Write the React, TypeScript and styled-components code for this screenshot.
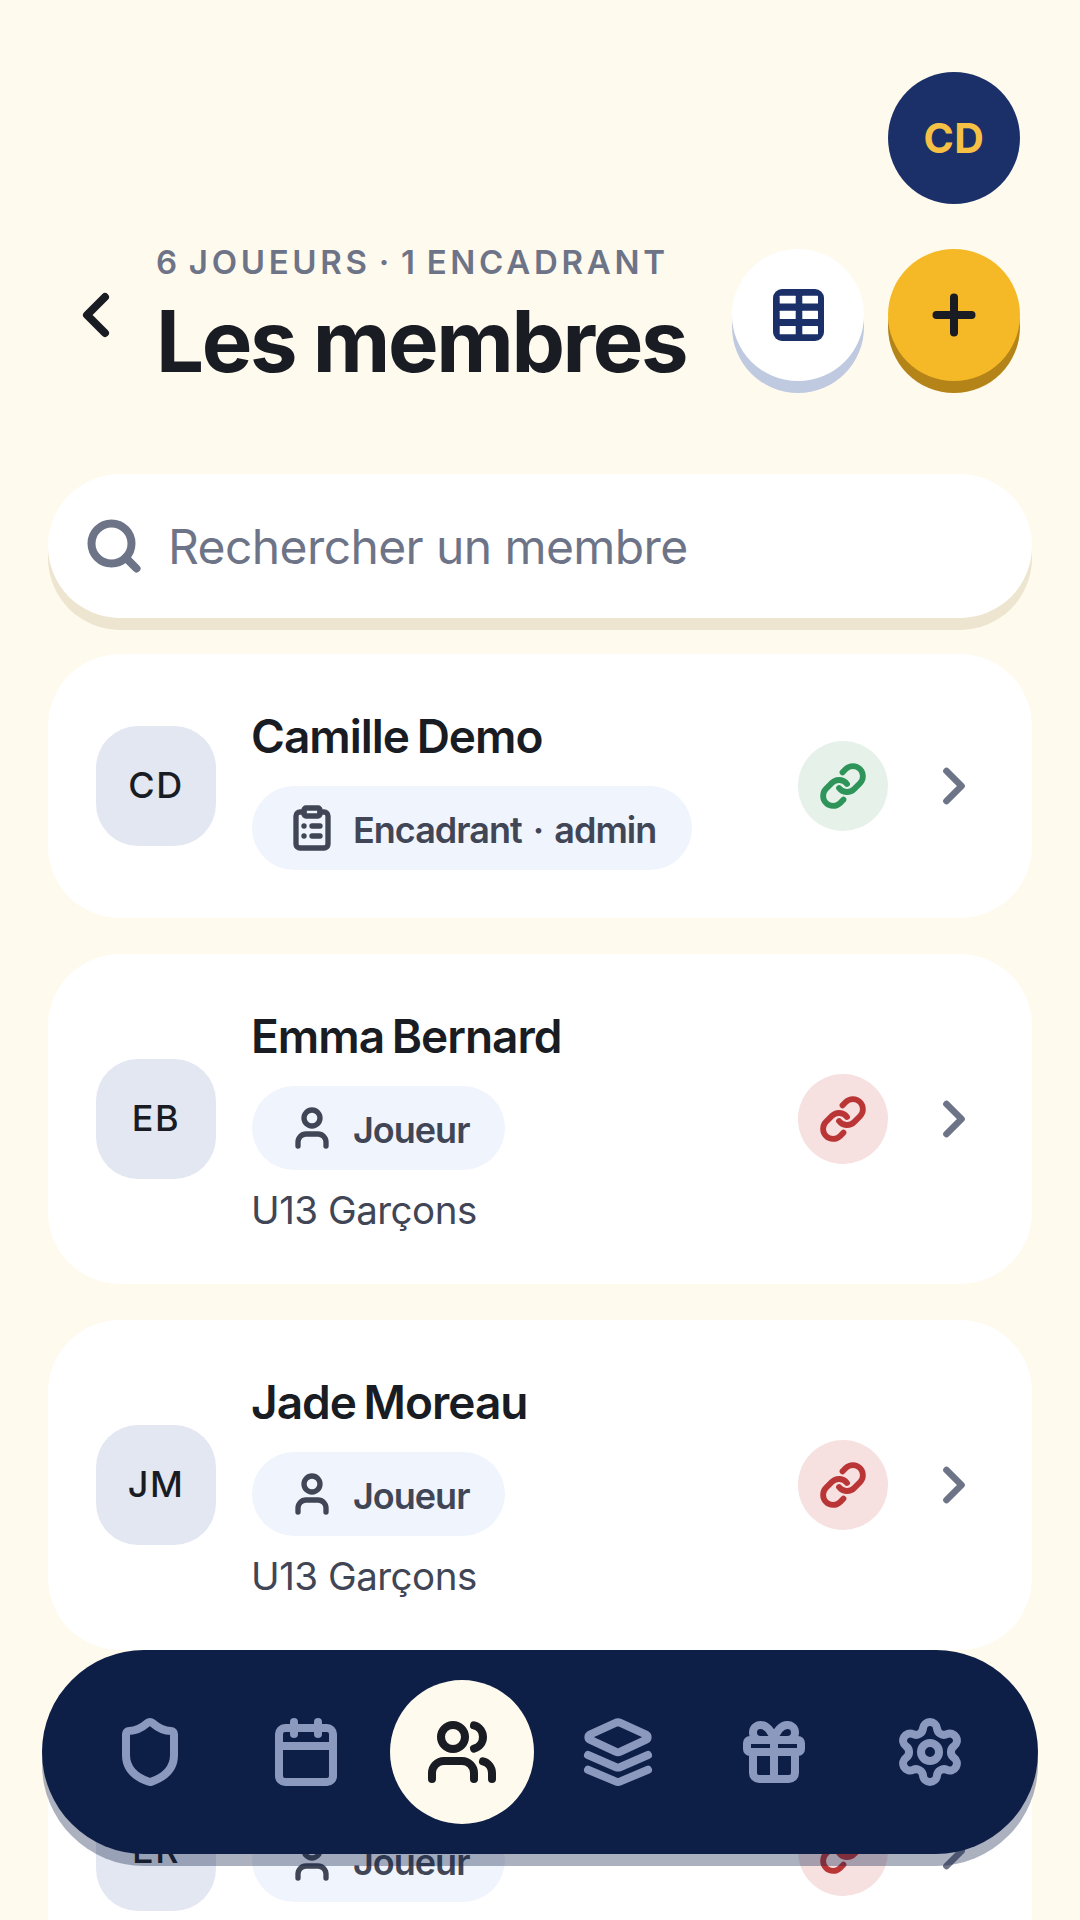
import React from "react";
import styled, { createGlobalStyle } from "styled-components";
import { Calendar, ChevronLeft, ChevronRight, ClipboardList, Gift, Link, Plus, Search, Settings, Shield, User, Users } from "lucide-react";

const colors = {
  cream: "#fffaee",
  navy: "#1b3068",
  darkNavy: "#0e1f47",
  ink: "#191c23",
  grey: "#6e7487",
  slate: "#414656",
  yellow: "#f5b928",
  periwinkle: "#8a99bd",
};

const GlobalStyle = createGlobalStyle`
  html, body {
    margin: 0;
    padding: 0;
    background: ${colors.cream};
  }
  body {
    font-family: Inter, "Liberation Sans", sans-serif;
  }
`;

interface Member {
  initials: string;
  name: string;
  role: string;
  team?: string;
  linked: boolean;
}

const members: Member[] = [
  { initials: "CD", name: "Camille Demo", role: "Encadrant · admin", linked: true },
  { initials: "EB", name: "Emma Bernard", role: "Joueur", team: "U13 Garçons", linked: false },
  { initials: "JM", name: "Jade Moreau", role: "Joueur", team: "U13 Garçons", linked: false },
  { initials: "ER", name: "Enzo Roux", role: "Joueur", team: "U13 Garçons", linked: false },
];

function TableIcon() {
  return (
    <svg width="51" height="52" viewBox="0 0 51 52">
      <rect width="51" height="52" rx="9" fill={colors.navy} />
      <g fill="#fff">
        <rect x="6.700" y="6.700" width="16" height="7.700" rx="0.500" />
        <rect x="29.300" y="6.700" width="15.700" height="7.700" rx="0.500" />
        <rect x="6.700" y="21.800" width="16" height="8.200" rx="0.500" />
        <rect x="29.300" y="21.800" width="15.700" height="8.200" rx="0.500" />
        <rect x="6.700" y="37" width="16" height="8.300" rx="0.500" />
        <rect x="29.300" y="37" width="15.700" height="8.300" rx="0.500" />
      </g>
    </svg>
  );
}

function StackIcon() {
  return (
    <svg width="72" height="72" viewBox="0 0 24 24" fill="none" stroke="currentColor" strokeWidth="2.67" strokeLinecap="round" strokeLinejoin="round">
      <path d="M12.800 2.300a2 2 0 0 0-1.600 0L2.600 6.200a1 1 0 0 0 0 1.700l8.600 4a2 2 0 0 0 1.600 0l8.600-4a1 1 0 0 0 0-1.700z" />
      <path d="M2 13l9.200 4a2 2 0 0 0 1.600 0L22 13" />
      <path d="M2 17.900l9.200 3.900a2 2 0 0 0 1.600 0L22 17.900" />
    </svg>
  );
}

export default function App() {
  return (
    <Page>
      <GlobalStyle />
      <TopBar>
        <ProfileBadge>CD</ProfileBadge>
      </TopBar>
      <Header>
        <BackButton>
          <ChevronLeft size={72} strokeWidth={2.67} />
        </BackButton>
        <Heading>
          <Eyebrow>6 JOUEURS · 1 ENCADRANT</Eyebrow>
          <Title>Les membres</Title>
        </Heading>
        <RoundButton $bg="#ffffff" $edge="#bfc9e0">
          <TableIcon />
        </RoundButton>
        <RoundButton $bg={colors.yellow} $edge="#b58419">
          <Plus size={60} strokeWidth={3.2} color={colors.ink} />
        </RoundButton>
      </Header>
      <SearchBar>
        <Search size={60} strokeWidth={3.2} color={colors.grey} />
        <SearchText>Rechercher un membre</SearchText>
      </SearchBar>
      <List>
        {members.map((m) => (
          <Card key={m.initials}>
            <Initials>{m.initials}</Initials>
            <Info>
              <Name>{m.name}</Name>
              <RolePill>
                {m.team ? <User size={48} strokeWidth={2.67} /> : <ClipboardList size={48} strokeWidth={2.67} />}
                <RoleLabel>{m.role}</RoleLabel>
              </RolePill>
              {m.team ? <Team>{m.team}</Team> : null}
            </Info>
            <LinkBadge $linked={m.linked}>
              <Link size={48} strokeWidth={2.9} />
            </LinkBadge>
            <Chevron>
              <ChevronRight size={60} strokeWidth={2.67} />
            </Chevron>
          </Card>
        ))}
      </List>
      <BottomNav>
        <NavItem><Shield size={72} strokeWidth={2.67} /></NavItem>
        <NavItem><Calendar size={72} strokeWidth={2.67} /></NavItem>
        <NavItem $active><Users size={72} strokeWidth={2.67} /></NavItem>
        <NavItem><StackIcon /></NavItem>
        <NavItem><Gift size={72} strokeWidth={2.67} /></NavItem>
        <NavItem><Settings size={72} strokeWidth={2.67} /></NavItem>
      </BottomNav>
    </Page>
  );
}

const Page = styled.div`
  position: relative;
  width: 1080px;
  height: 1920px;
  overflow: hidden;
  box-sizing: border-box;
  padding: 72px 48px 0;
  background: ${colors.cream};
`;

const TopBar = styled.div`
  display: flex;
  justify-content: flex-end;
  padding-right: 12px;
`;

const ProfileBadge = styled.div`
  display: flex;
  align-items: center;
  justify-content: center;
  width: 132px;
  height: 132px;
  border-radius: 50%;
  background: ${colors.navy};
  color: #f6c044;
  font-size: 41px;
  font-weight: 700;
  letter-spacing: 0.5px;
`;

const Header = styled.div`
  display: flex;
  align-items: center;
  height: 144px;
  margin-top: 45px;
  padding-right: 12px;
`;

const BackButton = styled.div`
  display: flex;
  width: 108px;
  margin-top: -12px;
  padding-left: 12px;
  box-sizing: border-box;
  color: ${colors.ink};
`;

const Heading = styled.div`
  display: flex;
  flex-direction: column;
  flex: 1;
  margin-top: -12px;
`;

const Eyebrow = styled.div`
  font-size: 33px;
  line-height: 36px;
  font-weight: 600;
  letter-spacing: 3.7px;
  word-spacing: -4px;
  color: ${colors.grey};
`;

const Title = styled.div`
  margin-top: 17px;
  font-size: 85px;
  line-height: 90px;
  font-weight: 700;
  letter-spacing: -2.4px;
  color: ${colors.ink};
`;

const RoundButton = styled.div<{ $bg: string; $edge: string }>`
  display: flex;
  flex-shrink: 0;
  align-items: center;
  justify-content: center;
  width: 132px;
  height: 132px;
  margin-left: 24px;
  margin-bottom: 12px;
  border-radius: 50%;
  background: ${(p) => p.$bg};
  box-shadow: 0 12px 0 ${(p) => p.$edge};
`;

const SearchBar = styled.div`
  display: flex;
  align-items: center;
  gap: 24px;
  height: 144px;
  margin-top: 81px;
  padding: 0 36px;
  box-sizing: border-box;
  border-radius: 72px;
  background: #ffffff;
  box-shadow: 0 12px 0 #ede5cf;
`;

const SearchText = styled.span`
  font-size: 48px;
  font-weight: 400;
  letter-spacing: -0.6px;
  color: ${colors.grey};
`;

const List = styled.div`
  display: flex;
  flex-direction: column;
  flex-shrink: 0;
  gap: 36px;
  margin-top: 36px;
`;

const Card = styled.div`
  display: flex;
  align-items: center;
  flex-shrink: 0;
  padding: 48px;
  box-sizing: border-box;
  border-radius: 72px;
  background: #ffffff;
`;

const Initials = styled.div`
  display: flex;
  align-items: center;
  justify-content: center;
  flex-shrink: 0;
  width: 120px;
  height: 120px;
  padding-bottom: 2px;
  box-sizing: border-box;
  border-radius: 42px;
  background: #e3e7f2;
  color: ${colors.ink};
  font-size: 36px;
  font-weight: 500;
  letter-spacing: 1.5px;
`;

const Info = styled.div`
  display: flex;
  flex-direction: column;
  align-items: flex-start;
  flex: 1;
  margin-left: 36px;
`;

const Name = styled.div`
  height: 66px;
  margin-left: -1px;
  padding-top: 1px;
  box-sizing: border-box;
  font-size: 46px;
  line-height: 66px;
  font-weight: 600;
  letter-spacing: -1px;
  word-spacing: -3px;
  color: ${colors.ink};
`;

const RolePill = styled.div`
  display: flex;
  align-items: center;
  gap: 17px;
  height: 84px;
  margin-top: 18px;
  padding: 0 36px;
  box-sizing: border-box;
  border-radius: 42px;
  background: #f0f4fc;
  color: ${colors.slate};
  font-size: 36px;
  font-weight: 600;
  letter-spacing: -1px;
  word-spacing: 3px;
`;

const RoleLabel = styled.span`
  padding-top: 4px;
`;

const Team = styled.div`
  height: 54px;
  margin-top: 12px;
  margin-left: -1px;
  padding-top: 1px;
  box-sizing: border-box;
  font-size: 38.500px;
  line-height: 54px;
  color: ${colors.slate};
  letter-spacing: -0.5px;
`;

const LinkBadge = styled.div<{ $linked: boolean }>`
  display: flex;
  align-items: center;
  justify-content: center;
  width: 90px;
  height: 90px;
  border-radius: 50%;
  background: ${(p) => (p.$linked ? "#e6f1ea" : "#f6e0e0")};
  color: ${(p) => (p.$linked ? "#2e945a" : "#ba3636")};
`;

const Chevron = styled.div`
  display: flex;
  margin-left: 36px;
  color: ${colors.grey};
`;

const BottomNav = styled.nav`
  position: absolute;
  left: 42px;
  top: 1650px;
  display: flex;
  align-items: center;
  justify-content: space-between;
  width: 996px;
  height: 204px;
  padding: 0 36px;
  box-sizing: border-box;
  border-radius: 102px;
  background: ${colors.darkNavy};
  box-shadow: 0 12px 0 rgba(14, 31, 71, 0.35);
`;

const NavItem = styled.div<{ $active?: boolean }>`
  display: flex;
  align-items: center;
  justify-content: center;
  width: 144px;
  height: 144px;
  border-radius: 50%;
  background: ${(p) => (p.$active ? colors.cream : "transparent")};
  color: ${(p) => (p.$active ? colors.ink : colors.periwinkle)};
`;
